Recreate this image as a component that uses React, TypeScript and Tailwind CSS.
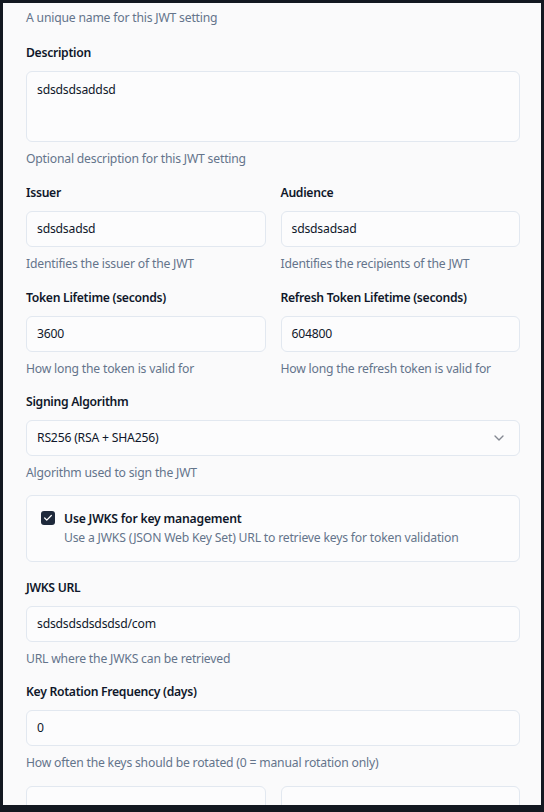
import { Check, ChevronDown } from 'lucide-react';

interface FieldProps {
  label: string;
  value: string;
  help: string;
  className?: string;
}

function Field({ label, value, help, className }: FieldProps) {
  return (
    <div className={className}>
      <div className="text-[12.2px] leading-5 font-semibold tracking-[-0.3px] text-[#0f172a]">{label}</div>
      <div className="mt-2 flex h-9 items-center rounded-md border border-[#e2e8f0] bg-[#fcfcfd] px-[10px] text-[12.2px] text-[#0f172a]">
        {value}
      </div>
      <div className="mt-[7px] text-[12.2px] leading-5 text-[#64748b]">{help}</div>
    </div>
  );
}

export default function App() {
  return (
    <div className="h-[812px] w-[544px] overflow-hidden bg-[#131821] pt-[3px] font-['Noto_Sans',sans-serif]">
      <div className="ml-[3px] flex h-[802px] w-[538px] flex-col overflow-hidden bg-[#fafafb] pl-[23px] pr-[21px] pt-[5px] tracking-[-0.2px]">
        <div className="text-[12.2px] leading-5 text-[#64748b]">A unique name for this JWT setting</div>

        <div className="mt-[15px]">
          <div className="text-[12.2px] leading-5 font-semibold tracking-[-0.3px] text-[#0f172a]">Description</div>
          <div className="mt-2 h-[71px] rounded-md border border-[#e2e8f0] bg-[#fcfcfd] px-[10px] py-2 text-[12.2px] leading-5 text-[#0f172a]">
            sdsdsdsaddsd
          </div>
          <div className="mt-[7px] text-[12.2px] leading-5 text-[#64748b]">Optional description for this JWT setting</div>
        </div>

        <div className="mt-[14px] grid grid-cols-2 gap-x-[15px]">
          <Field label="Issuer" value="sdsdsadsd" help="Identifies the issuer of the JWT" />
          <Field label="Audience" value="sdsdsadsad" help="Identifies the recipients of the JWT" />
        </div>

        <div className="mt-[14px] grid grid-cols-2 gap-x-[15px]">
          <Field label="Token Lifetime (seconds)" value="3600" help="How long the token is valid for" />
          <Field label="Refresh Token Lifetime (seconds)" value="604800" help="How long the refresh token is valid for" />
        </div>

        <div className="mt-[13px]">
          <div className="text-[12.2px] leading-5 font-semibold tracking-[-0.3px] text-[#0f172a]">Signing Algorithm</div>
          <div className="mt-2 flex h-9 items-center justify-between rounded-md border border-[#e2e8f0] bg-[#fcfcfd] pl-[10px] pr-3 text-[12.2px] text-[#0f172a]">
            <span>RS256 (RSA + SHA256)</span>
            <ChevronDown className="h-4 w-4 text-[#0f172a] opacity-50" />
          </div>
          <div className="mt-[7px] text-[12.2px] leading-5 text-[#64748b]">Algorithm used to sign the JWT</div>
        </div>

        <div className="mt-3 flex items-start gap-[9px] rounded-md border border-[#e2e8f0] bg-[#fcfcfd] pb-[14px] pl-[14px] pr-3 pt-[13px]">
          <div className="mt-[2px] flex h-[14px] w-[14px] shrink-0 items-center justify-center rounded-[3px] bg-[#1e293b]">
            <Check className="h-[10px] w-[10px] text-white" strokeWidth={3} />
          </div>
          <div>
            <div className="text-[12.2px] leading-[19px] font-semibold text-[#0f172a]">Use JWKS for key management</div>
            <div className="text-[12.2px] leading-[19px] text-[#64748b]">
              Use a JWKS (JSON Web Key Set) URL to retrieve keys for token validation
            </div>
          </div>
        </div>

        <Field
          className="mt-4"
          label="JWKS URL"
          value="sdsdsdsdsdsdsd/com"
          help="URL where the JWKS can be retrieved"
        />

        <Field
          className="mt-[13px]"
          label="Key Rotation Frequency (days)"
          value="0"
          help="How often the keys should be rotated (0 = manual rotation only)"
        />

        <div className="mt-[13px] grid grid-cols-2 gap-x-[15px]">
          <div className="h-9 rounded-md border border-[#e2e8f0] bg-[#fcfcfd]" />
          <div className="h-9 rounded-md border border-[#e2e8f0] bg-[#fcfcfd]" />
        </div>
      </div>
    </div>
  );
}
